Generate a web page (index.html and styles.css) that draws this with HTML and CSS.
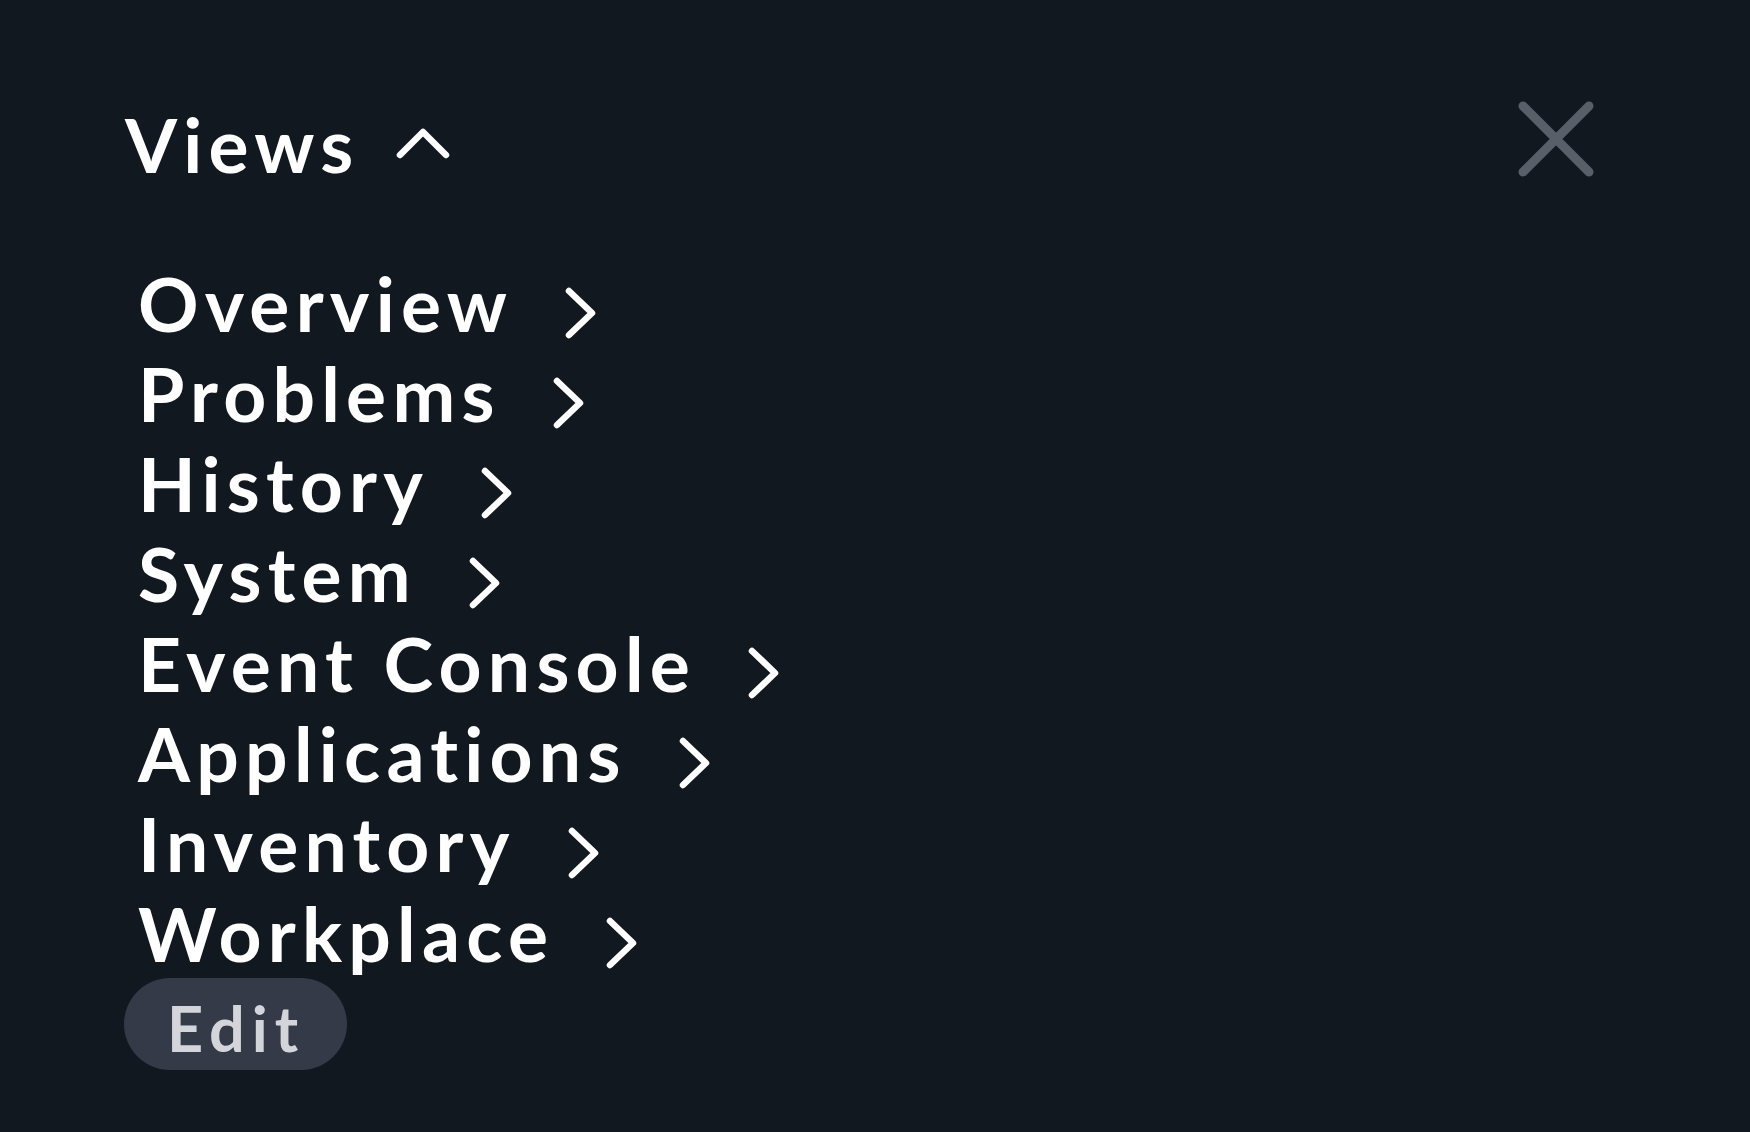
FILE: index.html
```html
<!DOCTYPE html>
<html lang="en">
<head>
<meta charset="utf-8">
<title>Views</title>
<link rel="stylesheet" href="styles.css">
</head>
<body>
<div class="panel">
  <div class="header">
    <div class="title">Views<svg class="caret" width="56" height="36" viewBox="0 0 56 36"><path d="M5 31 L28 8 L51 31" fill="none" stroke="#fff" stroke-width="6.5" stroke-linecap="round" stroke-linejoin="round"/></svg></div>
    <svg class="close" width="86" height="86" viewBox="0 0 86 86"><path d="M10 10 L76 76 M76 10 L10 76" fill="none" stroke="#595f69" stroke-width="9" stroke-linecap="round"/></svg>
  </div>
  <ul class="menu">
    <li class="item">Overview<svg class="chev" width="34" height="54" viewBox="0 0 34 54"><path d="M6 5 L29 27 L6 49" fill="none" stroke="#fff" stroke-width="6.5" stroke-linecap="round" stroke-linejoin="round"/></svg></li>
    <li class="item">Problems<svg class="chev" width="34" height="54" viewBox="0 0 34 54"><path d="M6 5 L29 27 L6 49" fill="none" stroke="#fff" stroke-width="6.5" stroke-linecap="round" stroke-linejoin="round"/></svg></li>
    <li class="item">History<svg class="chev" width="34" height="54" viewBox="0 0 34 54"><path d="M6 5 L29 27 L6 49" fill="none" stroke="#fff" stroke-width="6.5" stroke-linecap="round" stroke-linejoin="round"/></svg></li>
    <li class="item">System<svg class="chev" width="34" height="54" viewBox="0 0 34 54"><path d="M6 5 L29 27 L6 49" fill="none" stroke="#fff" stroke-width="6.5" stroke-linecap="round" stroke-linejoin="round"/></svg></li>
    <li class="item">Event Console<svg class="chev" width="34" height="54" viewBox="0 0 34 54"><path d="M6 5 L29 27 L6 49" fill="none" stroke="#fff" stroke-width="6.5" stroke-linecap="round" stroke-linejoin="round"/></svg></li>
    <li class="item">Applications<svg class="chev" width="34" height="54" viewBox="0 0 34 54"><path d="M6 5 L29 27 L6 49" fill="none" stroke="#fff" stroke-width="6.5" stroke-linecap="round" stroke-linejoin="round"/></svg></li>
    <li class="item">Inventory<svg class="chev" width="34" height="54" viewBox="0 0 34 54"><path d="M6 5 L29 27 L6 49" fill="none" stroke="#fff" stroke-width="6.5" stroke-linecap="round" stroke-linejoin="round"/></svg></li>
    <li class="item">Workplace<svg class="chev" width="34" height="54" viewBox="0 0 34 54"><path d="M6 5 L29 27 L6 49" fill="none" stroke="#fff" stroke-width="6.5" stroke-linecap="round" stroke-linejoin="round"/></svg></li>
  </ul>
  <div class="edit">Edit</div>
</div>
</body>
</html>
```
FILE: styles.css
```css
html, body {
  margin: 0;
  padding: 0;
  background: #121820;
}
body {
  width: 1750px;
  height: 1132px;
  overflow: hidden;
  font-family: Lato, "Liberation Sans", sans-serif;
  font-weight: 700;
  color: #fff;
}
.panel {
  padding: 99px 151px 0 125px;
}
.header {
  display: flex;
  justify-content: space-between;
  align-items: flex-start;
}
.title {
  font-size: 75px;
  line-height: 90px;
  letter-spacing: 0.083em;
  display: flex;
  align-items: center;
}
.caret {
  margin-left: 35px;
  margin-top: -4px;
}
.close {
  margin-top: -3px;
}
.menu {
  list-style: none;
  margin: 69px 0 0 0;
  padding: 0 0 0 13px;
}
.item {
  font-size: 75px;
  line-height: 90px;
  height: 90px;
  letter-spacing: 0.083em;
  white-space: nowrap;
}
.chev {
  vertical-align: middle;
  margin-left: 50px;
}
.edit {
  display: inline-block;
  background: #343a48;
  color: #d3d5da;
  font-size: 63px;
  line-height: 85px;
  padding: 7px 42px 0 43px;
  border-radius: 46px;
  letter-spacing: 0.11em;
  margin-left: -1px;
}
```
